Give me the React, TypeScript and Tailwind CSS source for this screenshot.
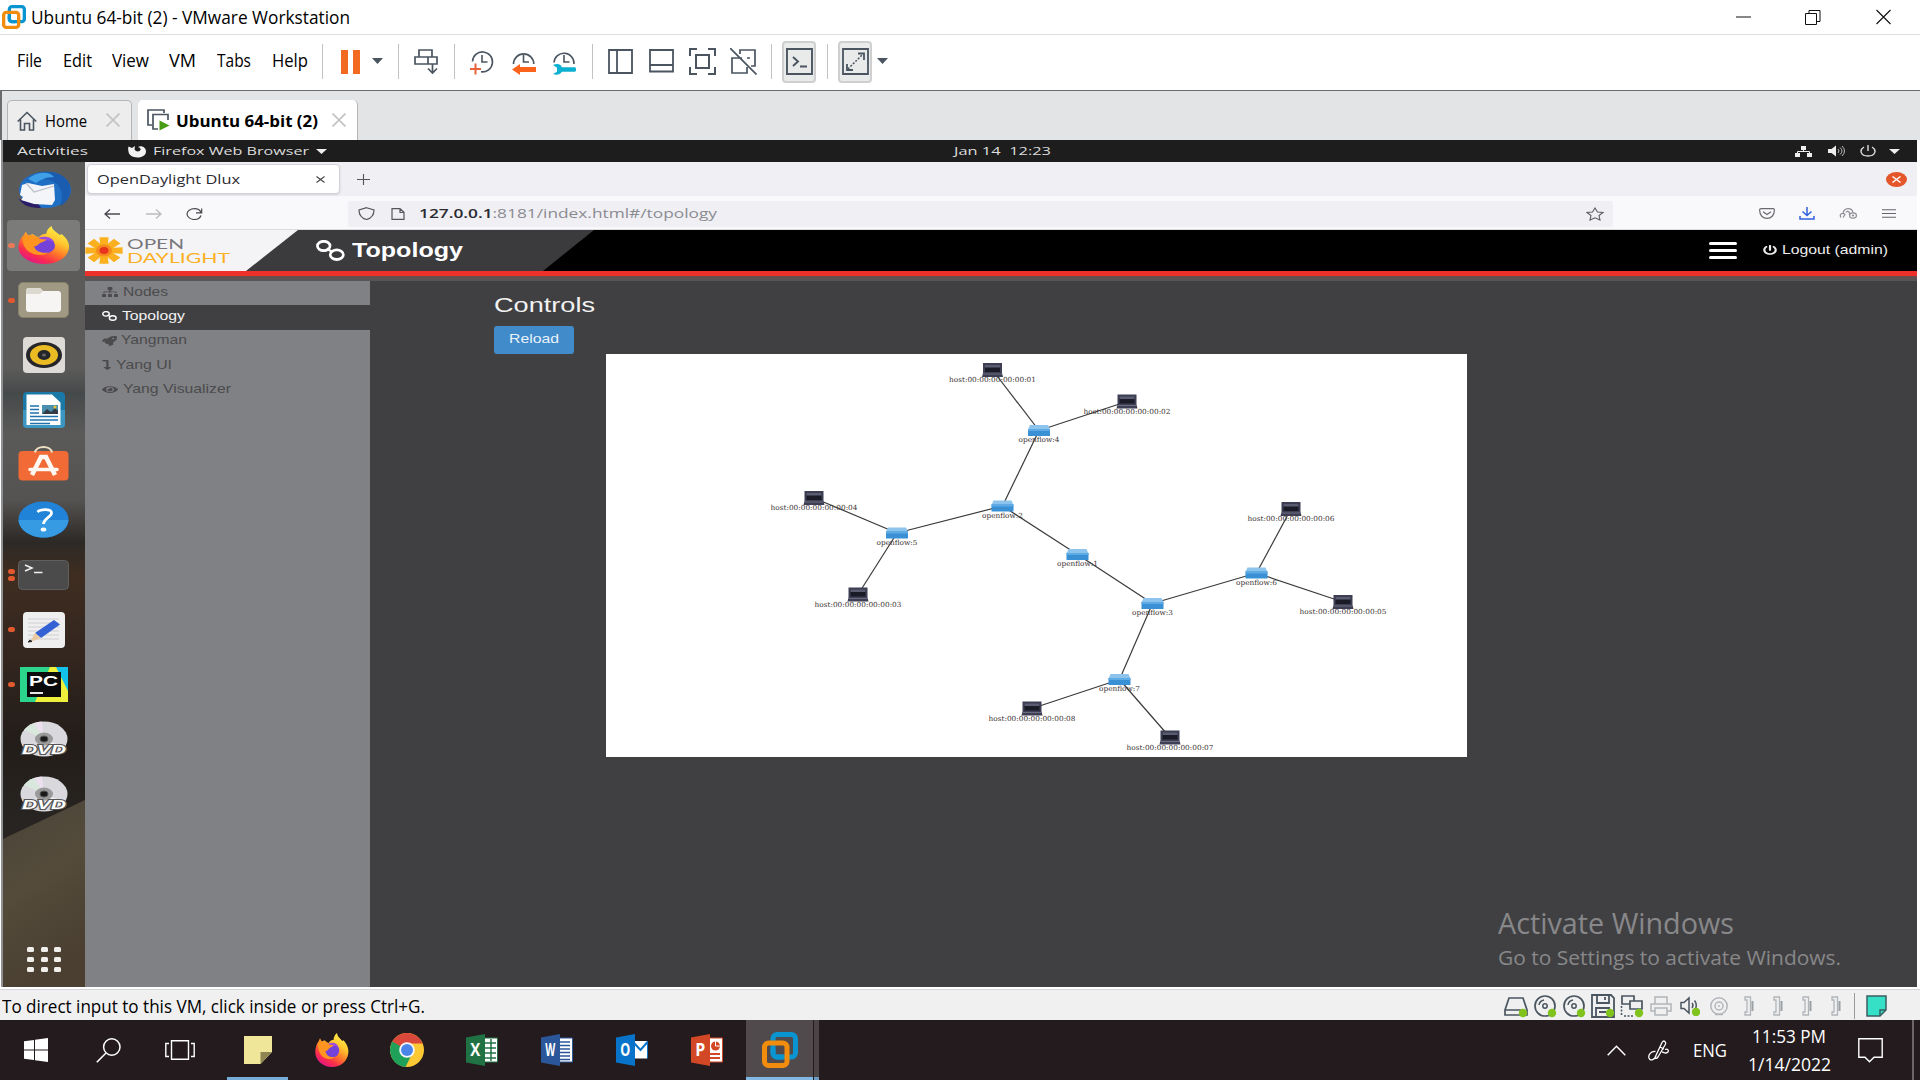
import React, { useLayoutEffect, useRef } from "react";
import { FaSitemap, FaRocket, FaEye, FaPowerOff, FaLevelDownAlt } from "react-icons/fa";

type FitProps = { className: string; children: React.ReactNode };

/* Stretches one line of text to the width of its box. */
function Fit({ className, children }: FitProps) {
  const outer = useRef<HTMLSpanElement>(null);
  const inner = useRef<HTMLSpanElement>(null);
  useLayoutEffect(() => {
    const o = outer.current;
    const i = inner.current;
    if (!o || !i) return;
    i.style.transform = "none";
    const ratio = o.getBoundingClientRect().width / i.getBoundingClientRect().width;
    i.style.transform = `scaleX(${ratio})`;
  });
  return (
    <span ref={outer} className={`block shrink-0 text-left whitespace-nowrap ${className}`}>
      <span ref={inner} className="inline-block origin-left">
        {children}
      </span>
    </span>
  );
}

type SvgProps = { box: string; className: string; children: React.ReactNode };
function Svg({ box, className, children }: SvgProps) {
  return (
    <svg viewBox={box} preserveAspectRatio="none" fill="none" className={`block shrink-0 ${className}`}>
      {children}
    </svg>
  );
}

const INK = "#4a5560";

function VmwareLogo({ className }: { className: string }) {
  return (
    <Svg box="0 0 36 36" className={className}>
      <rect x="11" y="2.5" width="22.5" height="22.5" rx="4" stroke="#0a94d0" strokeWidth="5" />
      <rect x="2.5" y="11" width="22.5" height="22.5" rx="4" stroke="#f28c0d" strokeWidth="5" />
      <path d="M11 16.5V21a4 4 0 0 0 4 4h5" stroke="#0a94d0" strokeWidth="5" />
    </Svg>
  );
}

function FirefoxLogo({ className, id }: { className: string; id: string }) {
  return (
    <Svg box="0 0 34 34" className={className}>
      <defs>
        <linearGradient id={id} x1="28" y1="3" x2="9" y2="33" gradientUnits="userSpaceOnUse">
          <stop offset="0" stopColor="#fff04a" />
          <stop offset="0.3" stopColor="#ffc52e" />
          <stop offset="0.55" stopColor="#ff7a28" />
          <stop offset="0.8" stopColor="#fb2d4c" />
          <stop offset="1" stopColor="#e31587" />
        </linearGradient>
      </defs>
      <path
        d="M3.500 8.500 5 5.200l1.700 3.200 3-1.200C10.500 8 12 9.500 13.500 10c1.500-2.500 3.500-3 5-3 .2-3 1.500-5.500 3.500-7 .3 3.600 2.800 5.300 5.300 8l1.200-.8c3.500 4.300 5.300 7.800 4.800 12.800C32.500 28 26 34 17 34S.3 27.300.3 19.200c0-4.200.9-7.700 3.200-10.700Z"
        fill={`url(#${id})`}
      />
      <circle cx="17" cy="17.500" r="7.200" fill="#7442d8" />
      <path d="M13.500 10.500c5-2 9 0 10.200 4.200-3-2.300-6-2-8-.2Z" fill="#9d4be0" />
      <path d="M3 9.500c4.500-1.800 8.500-1 11.500 2.200l4 .3c-.6 2-3.300 2.300-4.500 3.600-1.200 1.500-2 2.600-3.500 2.600 1 5 5 6.500 9.500 5.500-4 4-12 2.500-15-3.500C3.300 16.500 2.500 13 3 9.500Z" fill="#ff9420" />
    </Svg>
  );
}

function Clock({ children }: { children: React.ReactNode }) {
  return (
    <Svg box="0 0 24 26" className="h-[26px] w-[24px]">
      {children}
    </Svg>
  );
}

function Sep({ className }: { className: string }) {
  return <div className={`h-[35px] w-px shrink-0 bg-[#c2c2c2] ${className}`} />;
}

function TitleBar() {
  return (
    <div className="flex h-[34px] items-center bg-white">
      <VmwareLogo className="ml-[2px] h-6 w-6" />
      <Fit className="ml-[5px] w-[319px] pt-px text-[17.500px] text-black">Ubuntu 64-bit (2) - VMware Workstation</Fit>
      <Svg box="0 0 156 16" className="mr-[28px] ml-auto h-4 w-[156px]">
        <path d="M0 8h15" stroke="#111" />
        <path d="M69.500 4.500h11v11h-11zM73 4.500v-3h11v11h-3" stroke="#111" />
        <path d="m140.500 1 14 14m0-14-14 14" stroke="#111" strokeWidth="1.100" />
      </Svg>
    </div>
  );
}

function Caret() {
  return (
    <Svg box="0 0 11 6" className="h-[6px] w-[11px]">
      <path d="M0 0h11L5.500 6z" fill={INK} />
    </Svg>
  );
}

function Toolbar() {
  return (
    <div className="flex h-[54px] items-center border-t border-[#dedede] bg-white text-[17.500px] text-black">
      <div className="flex pb-[2px]">
        <Fit className="ml-[17px] w-[25px]">File</Fit>
        <Fit className="ml-[21px] w-[29px]">Edit</Fit>
        <Fit className="ml-[20px] w-[37px]">View</Fit>
        <Fit className="ml-[20px] w-[27px]">VM</Fit>
        <Fit className="ml-[21px] w-[34px]">Tabs</Fit>
        <Fit className="ml-[21px] w-[36px]">Help</Fit>
      </div>
      <Sep className="ml-[14px]" />
      <div className="ml-[18px] flex w-[19px] shrink-0 justify-between">
        <div className="h-[24px] w-[7px] bg-[#f26a22]" />
        <div className="h-[24px] w-[7px] bg-[#f26a22]" />
      </div>
      <div className="ml-[12px] pb-[2px]"><Caret /></div>
      <Sep className="ml-[15px]" />
      <Svg box="0 0 24 26" className="ml-[15px] h-[26px] w-[24px]">
        <path d="M5 1h13v7H5zM1 8h13v7H1zM14 8h9v7h-9zM18.500 15v9M14 19.500l4.500 4.500 4.500-4.500" stroke={INK} strokeWidth="1.700" />
      </Svg>
      <Sep className="ml-[16px]" />
      <div className="ml-[15px] shrink-0">
        <Clock>
          <path d="M2.500 12.500a10 10 0 1 1 8.500 10.300M12 6v7h5.500" stroke={INK} strokeWidth="1.600" />
          <path d="M5.500 14.500v11M0 20h11" stroke="#e8623a" strokeWidth="2" />
        </Clock>
      </div>
      <div className="ml-[18px] shrink-0">
        <Clock>
          <path d="M1.500 15a10 10 0 1 1 20.300 0M11.500 6v7H17" stroke={INK} strokeWidth="1.600" />
          <path d="M0 20.500 8 15v3h16v5H8v3z" fill="#f9631b" />
        </Clock>
      </div>
      <div className="ml-[16px] shrink-0">
        <Clock>
          <path d="M2 13.500a10 10 0 1 1 20 1.500M12 6v7h5.500" stroke={INK} strokeWidth="1.600" />
          <path d="M1 16c4-2 8-1 9 2.300h13c1.500 1 1.500 3.500 0 4.500H10C8 26 4 26.500 1 25l4-2.200v-4z" fill="#0cb0d0" />
        </Clock>
      </div>
      <Sep className="ml-[16px]" />
      <Svg box="0 0 25 25" className="ml-[15px] h-[25px] w-[25px]">
        <path d="M1 1h23v23H1zM9 1v23" stroke={INK} strokeWidth="1.800" />
      </Svg>
      <Svg box="0 0 25 25" className="ml-[16px] h-[25px] w-[25px]">
        <path d="M1 1h23v21.500H1zM1 16h23" stroke={INK} strokeWidth="1.800" />
      </Svg>
      <Svg box="0 0 27 27" className="ml-[15px] h-[27px] w-[27px]">
        <path d="M1 8V1h7M19 1h7v7M26 19v7h-7M8 26H1v-7M7 7h13v13H7z" stroke={INK} strokeWidth="2" />
      </Svg>
      <Svg box="0 0 27 27" className="ml-[14px] h-[27px] w-[27px]">
        <path d="M10 6V2h15v16h-4M12 10H2v15h15v-6M17 10h3M0 0l26.500 26.500" stroke={INK} strokeWidth="1.700" />
      </Svg>
      <Sep className="ml-[14px]" />
      <div className="ml-[10px] flex h-[42px] w-[34px] shrink-0 items-center justify-center rounded-[4px] border-2 border-[#cfcfcf] bg-[#e9eaea]">
        <Svg box="0 0 27 27" className="h-[27px] w-[27px]">
          <path d="M1 1h25v25H1zM7 9l5 4.500L7 18M14 18.500h7" stroke={INK} strokeWidth="1.900" />
        </Svg>
      </div>
      <Sep className="ml-[11px]" />
      <div className="ml-[10px] flex h-[42px] w-[34px] shrink-0 items-center justify-center rounded-[4px] border-2 border-[#cfcfcf] bg-[#e9eaea]">
        <Svg box="0 0 27 27" className="h-[27px] w-[27px]">
          <path d="M1 1h25v25H1zM16 5.500h6V12M5 16v6h6" stroke={INK} strokeWidth="1.800" />
          <path d="M6 21 21 6" stroke={INK} strokeWidth="1.500" strokeDasharray="2 1.500" />
        </Svg>
      </div>
      <div className="ml-[5px] pb-[2px]"><Caret /></div>
    </div>
  );
}

function TabClose({ className }: { className: string }) {
  return (
    <Svg box="0 0 14 14" className={`h-[14px] w-[14px] ${className}`}>
      <path d="m.5.500 13 13m0-13-13 13" stroke="#c3c3c3" strokeWidth="1.700" />
    </Svg>
  );
}

function VmTabs() {
  return (
    <div className="mt-[2px] flex h-[50px] items-end border-t-[1.500px] border-l-2 border-[#6b6b6b] bg-[#e3e4e5] text-[16.500px] text-black">
      <div className="ml-[5px] flex h-[40px] w-[125px] shrink-0 items-center rounded-t-[5px] border border-b-0 border-[#b5b5b5] bg-[#ededee]">
        <Svg box="0 0 20 20" className="ml-[9px] h-[20px] w-[20px]">
          <path d="M.7 10.500 10 1.500l9.300 9M3.500 8.500V19H7.500v-6.500h5V19h4V8.500" stroke={INK} strokeWidth="1.600" />
        </Svg>
        <Fit className="ml-[8px] w-[42px] pt-px">Home</Fit>
        <TabClose className="-mt-px ml-[19px]" />
      </div>
      <div className="ml-[6px] flex h-[40px] w-[220px] shrink-0 items-center rounded-t-[5px] border-r border-[#b5b5b5] bg-white">
        <Svg box="0 0 23 22" className="ml-[9px] h-[22px] w-[23px]">
          <path d="M5 16H1V1h16v3M11 20H6V5.500h15V11" stroke={INK} strokeWidth="1.700" />
          <path d="m12.500 11.500 10 5-10 5z" fill="#479c14" />
        </Svg>
        <Fit className="ml-[6px] w-[142px] pt-[2px] font-bold">Ubuntu 64-bit (2)</Fit>
        <TabClose className="-mt-px ml-[14px]" />
      </div>
    </div>
  );
}

function GnomeBar() {
  return (
    <div className="flex h-[22px] items-center bg-[#1d1d1d] text-[11px] font-medium text-[#dedede]">
      <Fit className="ml-[14px] w-[71px]">Activities</Fit>
      <Svg box="0 0 18 13" className="ml-[40px] h-[13px] w-[18px]">
        <path d="M.5 1.500 4 3 7 1 6.500 4.500C8 7 11.500 7 12.500 5 13 3.500 12 2.500 10 2c3.500-2 8 .5 8 4.500 0 3.500-3.500 6-8.500 6S.5 9.500.5 6.500C0 4.500 0 3 .5 1.500Z" fill="#f2f2f2" />
      </Svg>
      <Fit className="ml-[7px] w-[156px]">Firefox Web Browser</Fit>
      <Svg box="0 0 11 5" className="ml-[7px] h-[5px] w-[11px]"><path d="M0 0h11L5.500 5z" fill="#eee" /></Svg>
      <Fit className="ml-[627px] w-[97px] whitespace-pre">{"Jan 14  12:23"}</Fit>
      <Svg box="0 0 17 11" className="ml-[744px] h-[11px] w-[17px]">
        <path d="M6 0h5v4H6zM0 7h5v4H0zM12 7h5v4h-5z" fill="#eee" />
        <path d="M8.500 3v2.500M2.500 8V5.500h12V8" stroke="#eee" />
      </Svg>
      <Svg box="0 0 17 12" className="ml-[16px] h-[12px] w-[17px]">
        <path d="M0 4h3.500L8 .5v11L3.500 8H0z" fill="#eee" />
        <path d="M10 4q2 2 0 4M12 2.500q4 3.500 0 7M14 1q5 5 0 10" stroke="#bbb" />
      </Svg>
      <Svg box="0 0 16 12" className="ml-[15px] h-[12px] w-[16px]">
        <path d="M4 2C-1 5 .5 11 8 11s9-6 4-9M8 0v6" stroke="#ddd" strokeWidth="1.400" />
      </Svg>
      <Svg box="0 0 11 5" className="ml-[13px] h-[5px] w-[11px]"><path d="M0 0h11L5.500 5z" fill="#eee" /></Svg>
    </div>
  );
}

function Dvd() {
  return (
    <Svg box="0 0 48 36" className="h-[36px] w-[48px]">
      <ellipse cx="24" cy="18" rx="23.500" ry="17.500" fill="#d9d8dc" />
      <path d="M24 18 4 9Q8 4 14 2z" fill="#d8e8dc" />
      <path d="M24 18 14 2Q18 .5 22 .5z" fill="#ece0ee" />
      <path d="M24 18 44 26Q40 32 34 34z" fill="#efefef" />
      <ellipse cx="24" cy="18" rx="9" ry="6.500" fill="#9a9a9a" />
      <ellipse cx="24" cy="18" rx="4" ry="3" fill="#1c1a19" stroke="#555" />
      <text x="2" y="32.500" textLength="44" lengthAdjust="spacingAndGlyphs" fontFamily="Liberation Sans" fontStyle="italic" fontWeight="700" fontSize="12" fill="#fff" stroke="#555" strokeWidth="1.800" paintOrder="stroke">DVD</text>
    </Svg>
  );
}

const dock: { name: string; dots: number; active?: boolean; icon: React.ReactNode }[] = [
  {
    name: "thunderbird", dots: 0,
    icon: (
      <Svg box="0 0 56 38" className="h-[38px] w-[56px]">
        <ellipse cx="29" cy="19" rx="26" ry="18" fill="#1f6fc4" />
        <path d="M10 10C18-2 42-3 52 10c5 9 2 20-8 25 4-8 2-20-6-24-8-4-20-4-28-1Z" fill="#1a5db0" />
        <path d="M12 8C20 0 34 0 38 6c-8 0-14 3-18 6z" fill="#3fa0e8" />
        <path d="M3 28c4 7 12 9 22 9l-4-6z" fill="#2a1c66" />
        <path d="m6 14 6-2 14 3 12-2 1 16-3 5-18-1-13-4 2-3-3-2z" fill="#f4f5f8" />
        <path d="m10 12 8 9 20-6" stroke="#b9bec8" strokeWidth="1.200" />
      </Svg>
    ),
  },
  { name: "firefox", dots: 1, active: true, icon: <FirefoxLogo id="ff-dock" className="h-[38px] w-[52px]" /> },
  {
    name: "files", dots: 1,
    icon: (
      <div className="flex h-[36px] w-[51px] items-center justify-center rounded-[5px] border border-[#87816c] bg-[#a09a84]">
        <Svg box="0 0 37 24" className="h-[24px] w-[37px]">
          <path d="M1 3Q1 0 4 0h11l3 3h15q3 0 3 3v15q0 3-3 3H4q-3 0-3-3z" fill="#f6f5f3" />
          <path d="M1 3Q1 0 4 0h11l3 3-3 3H1z" fill="#dcd9d0" />
        </Svg>
      </div>
    ),
  },
  {
    name: "rhythmbox", dots: 0,
    icon: (
      <div className="flex h-[36px] w-[42px] items-center justify-center rounded-[4px] bg-[#dedad5]">
        <Svg box="0 0 36 26" className="h-[26px] w-[36px]">
          <ellipse cx="18" cy="13" rx="18" ry="13" fill="#26262a" />
          <ellipse cx="18" cy="13" rx="14" ry="10" fill="#eabb22" />
          <ellipse cx="18" cy="13" rx="6.500" ry="5" fill="#26262a" />
          <ellipse cx="18" cy="13" rx="2" ry="1.500" fill="#666" />
        </Svg>
      </div>
    ),
  },
  {
    name: "writer", dots: 0,
    icon: (
      <Svg box="0 0 42 36" className="h-[36px] w-[42px]">
        <rect width="42" height="36" rx="4" fill="#1b79a8" />
        <path d="M0 18h42v14q0 4-4 4H4q-4 0-4-4z" fill="#3b96c2" />
        <path d="M3.500 2.500H29l8.500 8V33h-34z" fill="#fff" />
        <path d="M7 14h9M7 17.500h9M7 21h9M7 24.500h28M7 28h28M7 31.500h20" stroke="#1f73ad" strokeWidth="1.500" />
        <path d="M19 13h16v9H19z" fill="#4b8fae" />
        <path d="m19 22 5-5 4 3 4-4 3 3v3z" fill="#333c44" />
        <circle cx="32" cy="15" r="1.500" fill="#f0c530" />
      </Svg>
    ),
  },
  {
    name: "software", dots: 0,
    icon: (
      <Svg box="0 0 51 36" className="-mt-[3px] h-[36px] w-[51px]">
        <rect x=".5" y="6" width="50" height="29.500" rx="4" fill="#f26a35" />
        <path d="M17 7.500C18 0 33 0 34 7.500" stroke="#eee0c4" strokeWidth="2" />
        <path d="M14 30 23 12h5l9 18" stroke="#fff8f2" strokeWidth="4.500" />
        <path d="M12 24.500h27" stroke="#fff8f2" strokeWidth="3.500" strokeLinecap="round" />
      </Svg>
    ),
  },
  {
    name: "help", dots: 0,
    icon: (
      <Svg box="0 0 51 37" className="h-[37px] w-[51px]">
        <ellipse cx="25.500" cy="18.500" rx="25" ry="18" fill="#2183d8" />
        <path d="M.5 19h50c-1 10-12 17.500-25 17.500S1.500 29 .5 19Z" fill="#379be3" />
        <path d="M19.500 11c3-3 14-3.500 14 1 0 4-7.500 5-8 11" stroke="#fff" strokeWidth="2.800" />
        <ellipse cx="25.500" cy="28.500" rx="2.800" ry="2" fill="#fff" />
      </Svg>
    ),
  },
  {
    name: "terminal", dots: 2,
    icon: (
      <Svg box="0 0 51 30" className="h-[30px] w-[51px]">
        <rect x=".5" y=".5" width="50" height="29" rx="4" fill="#4b4b4b" stroke="#5f5f5f" />
        <path d="m7 5 7 3-7 3M16 12.500h8.500" stroke="#f1f1f1" strokeWidth="1.500" />
      </Svg>
    ),
  },
  {
    name: "editor", dots: 1,
    icon: (
      <Svg box="0 0 42 36" className="h-[36px] w-[42px]">
        <rect width="42" height="36" rx="4" fill="#efeff0" />
        <path d="M5 7h31M5 11h31M5 15h31M5 19h31M5 23h31M5 27h31" stroke="#cfcfd2" />
        <path d="m12 21 19-13 6 4.500L18 26z" fill="#3461d4" />
        <path d="m12 21 6 5-11 4z" fill="#e9c9a0" />
        <path d="m5 30 2-2 2 1.500z" fill="#222" stroke="#222" />
      </Svg>
    ),
  },
  {
    name: "pycharm", dots: 1,
    icon: (
      <Svg box="0 0 48 35" className="h-[35px] w-[48px]">
        <path d="M0 0h48v35H0z" fill="#2bd68c" />
        <path d="M34 0h14v26z" fill="#12c2ea" />
        <path d="M15 35 30 0h6l12 24v11z" fill="#eef03c" />
        <path d="M7 5h34v25H7z" fill="#0b0b0b" />
        <text x="9" y="19" textLength="29" lengthAdjust="spacingAndGlyphs" fontFamily="Liberation Sans" fontWeight="700" fontSize="15" fill="#fff">PC</text>
        <path d="M10 26h13" stroke="#fff" strokeWidth="1.800" />
      </Svg>
    ),
  },
  { name: "dvd-1", dots: 0, icon: <Dvd /> },
  { name: "dvd-2", dots: 0, icon: <Dvd /> },
];

function Dock() {
  return (
    <div className="relative flex w-[82px] shrink-0 flex-col overflow-hidden bg-[#33261f]">
      <svg viewBox="0 0 82 825" preserveAspectRatio="none" className="absolute inset-0 h-full w-full">
        <defs>
          <linearGradient id="wall" x1="0" y1="0" x2="0" y2="1">
            <stop offset="0" stopColor="#5a5a58" />
            <stop offset="0.25" stopColor="#5c5b5a" />
            <stop offset="0.28" stopColor="#46494a" />
            <stop offset="0.33" stopColor="#5a5a59" />
            <stop offset="0.41" stopColor="#555351" />
            <stop offset="0.46" stopColor="#2c2926" />
            <stop offset="0.5" stopColor="#3f2d21" />
            <stop offset="0.6" stopColor="#33261f" />
            <stop offset="0.7" stopColor="#231d19" />
            <stop offset="0.8" stopColor="#272421" />
            <stop offset="1" stopColor="#272421" />
          </linearGradient>
          <linearGradient id="ground" x1="0" y1="0" x2="0.300" y2="1">
            <stop offset="0" stopColor="#4a4338" />
            <stop offset="0.5" stopColor="#544b3b" />
            <stop offset="1" stopColor="#4a3f31" />
          </linearGradient>
        </defs>
        <path d="M0 0h82v825H0z" fill="url(#wall)" />
        <path d="M0 677 82 638v187H0z" fill="url(#ground)" />
      </svg>
      <div className="relative flex flex-1 flex-col pt-px">
        {dock.map((d) => (
          <div key={d.name} className="flex h-[54.900px] shrink-0 items-center">
            <div className="flex w-[12px] shrink-0 flex-col items-end gap-[2px]">
              {Array.from({ length: d.dots }, (_, n) => (
                <div key={n} className="h-[5px] w-[7px] rounded-full bg-[#e0592f]" />
              ))}
            </div>
            <div
              className={
                d.active
                  ? "-ml-[8px] flex h-[51px] w-[73px] items-center justify-center rounded-[4px] bg-white/20"
                  : "-ml-[8px] flex h-[51px] w-[73px] items-center justify-center"
              }
            >
              {d.icon}
            </div>
          </div>
        ))}
        <div className="mt-auto mb-[15px] ml-[24px] grid w-[34px] grid-cols-3 gap-x-[7px] gap-y-[5px]">
          {Array.from({ length: 9 }, (_, n) => (
            <div key={n} className="h-[5px] w-[7px] rounded-[1.500px] bg-[#f1efec]" />
          ))}
        </div>
      </div>
    </div>
  );
}

function BrowserChrome() {
  return (
    <>
      <div className="flex h-[34px] shrink-0 items-center bg-[#f0eff3] text-[12px] text-[#2a2930]">
        <div className="ml-[2px] flex h-[30px] w-[253px] shrink-0 items-center rounded-[4px] border border-[#d3d2d8] bg-white pt-px shadow-sm">
          <Fit className="ml-[9px] w-[143px] pt-px font-medium">OpenDaylight Dlux</Fit>
          <Svg box="0 0 9 7" className="ml-[76px] h-[7px] w-[9px]">
            <path d="m.5.500 8 6m0-6-8 6" stroke="#444" strokeWidth="1.100" />
          </Svg>
        </div>
        <Svg box="0 0 13 11" className="mt-px ml-[17px] h-[11px] w-[13px]">
          <path d="M6.500 0v11M0 5.500h13" stroke="#555" strokeWidth="1.100" />
        </Svg>
        <div className="mr-[10px] ml-auto flex h-[15px] w-[21px] items-center justify-center rounded-[50%] bg-[#e4552a]">
          <Svg box="0 0 9 7" className="h-[7px] w-[9px]">
            <path d="m.5.500 8 6m0-6-8 6" stroke="#fff" strokeWidth="1.400" />
          </Svg>
        </div>
      </div>
      <div className="flex h-[34px] shrink-0 items-center border-b border-[#dcdce0] bg-[#f9f9fb] pt-[2px] text-[12px]">
        <Svg box="0 0 16 10" className="ml-[19px] h-[10px] w-[16px]">
          <path d="M16 5H1M6 .5 1 5l5 4.500" stroke="#4a4a50" strokeWidth="1.300" />
        </Svg>
        <Svg box="0 0 16 10" className="ml-[26px] h-[10px] w-[16px]">
          <path d="M0 5h15M10 .5 15 5l-5 4.500" stroke="#bcbcc0" strokeWidth="1.300" />
        </Svg>
        <Svg box="0 0 17 12" className="ml-[24px] h-[12px] w-[17px]">
          <path d="M15 7.500C14 10 11.500 11.500 8.500 11.500 4.500 11.500 1 9 1 6S4.500.7 8.500.7C11.500.7 14 2.200 15 4.500M15.700.5v4.300H10" stroke="#4a4a50" strokeWidth="1.200" />
        </Svg>
        <div className="ml-[145px] flex h-[26px] w-[1265px] shrink-0 items-center rounded-[3px] bg-[#f0f0f4]">
          <Svg box="0 0 17 13" className="ml-[10px] h-[13px] w-[17px]">
            <path d="M8.500.7 16 3c0 5-2 8-7.500 9.500C3 11 1 8 1 3Z" stroke="#55555b" strokeWidth="1.200" />
          </Svg>
          <Svg box="0 0 14 12" className="ml-[16px] h-[12px] w-[14px]">
            <path d="M1 .7h8l4 3.500v7.100H1zM9 .7v3.800h4" stroke="#55555b" strokeWidth="1.200" />
          </Svg>
          <Fit className="ml-[14px] w-[298px] text-[#8a8a91]">
            <span className="font-semibold text-[#2a2930]">127.0.0.1</span>:8181/index.html#/topology
          </Fit>
          <Svg box="0 0 18 14" className="mr-[9px] ml-auto h-[14px] w-[18px]">
            <path d="m9 1 2.500 4 5.500.5-4 3 1 4.500-5-2.200L4 13l1-4.500-4-3L6.500 5z" stroke="#5c5c62" strokeWidth="1.100" />
          </Svg>
        </div>
        <Svg box="0 0 16 11" className="ml-[146px] h-[11px] w-[16px]">
          <path d="M2 .6h12q1.400 0 1.400 1.500C15.400 7.500 12 10.300 8 10.300S.6 7.500.6 2.100Q.6.6 2 .6ZM4 3.700l4 2.800 4-2.800" stroke="#6a6a70" strokeWidth="1.200" />
        </Svg>
        <Svg box="0 0 16 13" className="ml-[24px] h-[13px] w-[16px]">
          <path d="M8 0v8M3.500 4.500 8 8.500l4.500-4M1 9v3h14V9" stroke="#2f62dc" strokeWidth="1.500" />
        </Svg>
        <Svg box="0 0 18 11" className="ml-[24px] h-[11px] w-[18px]">
          <path d="M2 9.500C-.5 6 4 4 6 6.500L4 9.500M4 5.500C5-1 13-.5 14 4.500" stroke="#8d8d92" strokeWidth="1.200" />
          <path d="M7 4.500C9 2 11 4 10.500 7" stroke="#8d8d92" strokeWidth="1.200" />
          <ellipse cx="14" cy="7.500" rx="3.400" ry="2.700" stroke="#8d8d92" strokeWidth="1.200" />
          <ellipse cx="14" cy="7.500" rx="1.200" ry="1" fill="#8d8d92" />
        </Svg>
        <Svg box="0 0 14 9" className="ml-[25px] h-[9px] w-[14px]">
          <path d="M0 .7h14M0 4.500h14M0 8.300h14" stroke="#66666b" strokeWidth="1.100" />
        </Svg>
      </div>
    </>
  );
}

function ChainIcon({ className }: { className: string }) {
  return (
    <Svg box="0 0 30 21" className={className}>
      <ellipse cx="8" cy="6" rx="6.500" ry="4.700" stroke="#fff" strokeWidth="2.800" />
      <ellipse cx="21.500" cy="14.700" rx="6.800" ry="4.800" stroke="#fff" strokeWidth="2.800" />
      <path d="m11 8.500 6 3.500" stroke="#fff" strokeWidth="2.500" />
    </Svg>
  );
}

function DluxHeader() {
  return (
    <>
      <div className="flex h-[41px] shrink-0 bg-black font-['Liberation_Sans',sans-serif]">
        <div className="flex w-[509px] shrink-0 bg-[#3b3b3d] [clip-path:polygon(0_0,100%_0,458px_100%,0_100%)]">
          <div className="flex w-[213px] shrink-0 items-center bg-[#f4f4f6] [clip-path:polygon(0_0,100%_0,161px_100%,0_100%)]">
            <Svg box="-19 -13.500 38 27" className="h-[27px] w-[38px]">
              {[0, 45, 90, 135].map((a) => (
                <path key={a} transform={`scale(1.400 1) rotate(${a})`} d="M-3.300-13.300h6.600l-1 13.300 1 13.300h-6.600l1-13.300z" fill="#fbb01f" />
              ))}
              <ellipse rx="8" ry="6" fill="#f58a1f" />
              <ellipse rx="4.500" ry="3.500" fill="#e8341c" />
            </Svg>
            <div className="ml-[4px] flex flex-col leading-[14px]">
              <Fit className="w-[57px] font-[Lato] text-[14px] font-normal text-[#77777a]">OPEN</Fit>
              <Fit className="w-[103px] font-[Lato] text-[14px] font-normal text-[#fbb01f]">DAYLIGHT</Fit>
            </div>
          </div>
          <div className="ml-[18px] flex items-center">
            <ChainIcon className="h-[21px] w-[29px]" />
            <Fit className="ml-[7px] w-[111px] pb-px text-[20px] font-bold text-white">Topology</Fit>
          </div>
        </div>
        <div className="mr-[29px] ml-auto flex items-center pb-px text-[13px] text-[#eee]">
          <div className="flex h-[17px] w-[28px] flex-col justify-between">
            <div className="h-[3px] rounded-sm bg-white" />
            <div className="h-[3px] rounded-sm bg-white" />
            <div className="h-[3px] rounded-sm bg-white" />
          </div>
          <FaPowerOff preserveAspectRatio="none" className="ml-[26px] h-[10px] w-[14px]" />
          <Fit className="ml-[5px] w-[106px]">Logout (admin)</Fit>
        </div>
      </div>
      <div className="h-[5px] shrink-0 bg-[#ee302a]" />
      <div className="h-[5px] shrink-0 bg-linear-to-b from-[#6b4d4c] to-[#545658]" />
    </>
  );
}

type Pt = [number, number];
const switches: Record<string, Pt> = {
  "1": [1077.5, 554.5], "2": [1002.5, 506], "3": [1152.5, 603.5], "4": [1039, 430.5],
  "5": [897, 533], "6": [1256.5, 573], "7": [1119.5, 679.5],
};
const hosts: Record<string, Pt> = {
  "01": [992.5, 370], "02": [1127, 401.5], "03": [858, 594.5], "04": [814, 498],
  "05": [1343, 602], "06": [1291, 509], "07": [1170, 737.5], "08": [1032, 708.5],
};
const links: [Pt, Pt][] = [
  [switches["1"], switches["2"]], [switches["1"], switches["3"]],
  [switches["2"], switches["4"]], [switches["2"], switches["5"]],
  [switches["3"], switches["6"]], [switches["3"], switches["7"]],
  [switches["4"], hosts["01"]], [switches["4"], hosts["02"]],
  [switches["5"], hosts["03"]], [switches["5"], hosts["04"]],
  [switches["6"], hosts["05"]], [switches["6"], hosts["06"]],
  [switches["7"], hosts["07"]], [switches["7"], hosts["08"]],
];

function TopologyGraph() {
  return (
    <svg viewBox="606 354 861 403" className="block h-[403px] w-[861px] bg-white">
      {links.map(([a, b], i) => (
        <line key={i} x1={a[0]} y1={a[1]} x2={b[0]} y2={b[1]} stroke="#3a3a3a" strokeWidth="1.200" />
      ))}
      {Object.entries(switches).map(([id, [x, y]]) => (
        <g key={id} transform={`translate(${x} ${y})`}>
          <path d="M-9-5.500H9l2 4.500h-22z" fill="#8cc4ee" />
          <path d="M-11-1.500h22v7h-22z" fill="#3a90d4" />
          <path d="M-11-1.500h22v2h-22z" fill="#5cabe4" />
          <text y="11.500" x="-20.500" textLength="41" lengthAdjust="spacingAndGlyphs" fontFamily="DejaVu Serif" fontSize="7" fill="#3c3434">{`openflow:${id}`}</text>
        </g>
      ))}
      {Object.entries(hosts).map(([id, [x, y]]) => (
        <g key={id} transform={`translate(${x} ${y})`}>
          <path d="M-9.500-7h19V3l1 4h-21l1-4z" fill="#3e3e54" />
          <path d="M-7.500-5.200h15V2h-15z" fill="#1b1b28" />
          <path d="M-7.500-5.200h15v2.700h-15z" fill="#5a5c72" />
          <path d="M-9.500 4h19" stroke="#77788c" strokeWidth=".8" />
          <text y="12" x="-43.500" textLength="87" lengthAdjust="spacingAndGlyphs" fontFamily="DejaVu Serif" fontSize="7" fill="#3c3434">{`host:00:00:00:00:00:${id}`}</text>
        </g>
      ))}
    </svg>
  );
}

function DluxBody() {
  return (
    <div className="flex flex-1 bg-[#404042] font-['Liberation_Sans',sans-serif]">
      <nav className="flex w-[285px] shrink-0 flex-col bg-[#808184] text-[13.500px] text-[#4b4b4d]">
        <div className="flex h-[24px] items-center pb-[2px] pl-[17px]">
          <FaSitemap preserveAspectRatio="none" className="h-[10px] w-[16px]" />
          <Fit className="ml-[5px] w-[45px]">Nodes</Fit>
        </div>
        <div className="flex h-[25px] items-center bg-[#404042] pb-[3px] pl-[17px] text-[#f2f2f2]">
          <ChainIcon className="h-[10px] w-[15px]" />
          <Fit className="ml-[5px] w-[63px]">Topology</Fit>
        </div>
        <div className="flex h-[24px] items-center pb-[3px] pl-[17px]">
          <FaRocket preserveAspectRatio="none" className="h-[10px] w-[15px]" />
          <Fit className="ml-[4px] w-[66px]">Yangman</Fit>
        </div>
        <div className="flex h-[24px] items-center pb-[2px] pl-[17px]">
          <FaLevelDownAlt preserveAspectRatio="none" className="h-[10px] w-[9px]" />
          <Fit className="ml-[5px] w-[56px]">Yang UI</Fit>
        </div>
        <div className="flex h-[24px] items-center pb-[2px] pl-[17px]">
          <FaEye preserveAspectRatio="none" className="h-[9px] w-[16px]" />
          <Fit className="ml-[5px] w-[108px]">Yang Visualizer</Fit>
        </div>
      </nav>
      <main className="flex flex-1 flex-col pl-[124px]">
        <Fit className="mt-[11px] w-[101px] text-[20px] leading-[26px] text-[#f2f2f2]">Controls</Fit>
        <button className="mt-[8px] flex h-[28px] w-[80px] justify-center rounded-[3px] bg-[#428bca] pt-[3px] text-[13px] text-[#e9f2f9]">
          <Fit className="w-[50px]">Reload</Fit>
        </button>
        <div className="ml-[112px]">
          <TopologyGraph />
        </div>
        <div className="mt-auto mb-[15px] ml-[1004px] flex flex-col font-['Open_Sans','Noto_Sans',sans-serif] text-[#88888a]">
          <Fit className="w-[236px] text-[29px] leading-[38px]">Activate Windows</Fit>
          <Fit className="w-[343px] text-[20.500px] leading-[30px]">Go to Settings to activate Windows.</Fit>
        </div>
      </main>
    </div>
  );
}

function Dot({ x, y }: { x: number; y: number }) {
  return <circle cx={x} cy={y} r="4.200" fill="#7fc31c" />;
}

function StatusBar() {
  return (
    <div className="flex h-[31px] items-center border-t border-[#d5d6db] bg-[#f0f0f0] pt-[2px] text-[17.500px] text-black">
      <Fit className="ml-[2px] w-[423px]">To direct input to this VM, click inside or press Ctrl+G.</Fit>
      <Svg box="0 0 24 24" className="ml-[1079px] h-6 w-6">
        <path d="M5 4h14l4 12v5H1v-5zM1 16h16" stroke={INK} strokeWidth="1.700" /><Dot x={19} y={19} />
      </Svg>
      {[0, 1].map((n) => (
        <Svg key={n} box="0 0 24 24" className="ml-[5px] h-6 w-6">
          <circle cx="12" cy="12" r="10" stroke={INK} strokeWidth="1.700" />
          <circle cx="12" cy="12" r="2.200" stroke={INK} strokeWidth="1.500" />
          <path d="M6 11a6 6 0 0 1 5-5" stroke={INK} strokeWidth="1.500" /><Dot x={19} y={19} />
        </Svg>
      ))}
      <Svg box="0 0 24 24" className="ml-[5px] h-6 w-6">
        <path d="M1 1h19l3 3v19H1zM6 1v8h12V1M14 3v3M5 23v-9h14M8 18h7" stroke={INK} strokeWidth="1.800" /><Dot x={19} y={19} />
      </Svg>
      <Svg box="0 0 24 24" className="ml-[5px] h-6 w-6">
        <path d="M2 2h12v8H2z" stroke={INK} strokeWidth="1.700" />
        <path d="M10 7h12v8H10z" fill="#f0f0f0" stroke={INK} strokeWidth="1.700" />
        <path d="M1.500 12v10M4 22h10" stroke={INK} strokeDasharray="2 1.500" strokeWidth="1.500" /><Dot x={19} y={19} />
      </Svg>
      <Svg box="0 0 22 20" className="ml-[6px] h-[20px] w-[22px]">
        <path d="M5 8V1h12v7M5 15H1V8h20v7h-4M5 12h12v7H5z" stroke="#b1b5b9" strokeWidth="1.500" />
      </Svg>
      <Svg box="0 0 20 20" className="ml-[8px] h-[20px] w-[20px]">
        <path d="M1 6.500h3l5-4.500v15l-5-4.500H1zM12 7q2 2 0 5M14.500 4.500q3 4 1 8" stroke={INK} strokeWidth="1.500" /><Dot x={16} y={16} />
      </Svg>
      <Svg box="0 0 20 20" className="ml-[9px] h-[20px] w-[20px]">
        <circle cx="10" cy="10" r="8.200" stroke="#b1b5b9" strokeWidth="1.500" />
        <circle cx="10" cy="10" r="4" stroke="#b1b5b9" strokeWidth="1.500" />
        <path d="M6 18.500h8M9 10h2" stroke="#b1b5b9" strokeWidth="1.500" />
      </Svg>
      <div className="ml-[15px] flex gap-[19px]">
        {[0, 1, 2, 3].map((n) => (
          <Svg key={n} box="0 0 10 20" className="h-[20px] w-[10px]">
            <path d="M1 1h5.500v18H1v-3h2V4H1z" stroke="#b1b5b9" strokeWidth="1.300" />
            <path d="M8.500 5v10" stroke="#9ba0a5" strokeWidth="2" />
          </Svg>
        ))}
      </div>
      <div className="ml-[13px] h-[26px] w-px bg-[#9a9a9a]" />
      <Svg box="0 0 21 22" className="ml-[11px] h-[22px] w-[21px]">
        <path d="M1 1h19v14l-6 6H1z" fill="#35e0c6" stroke="#3b5c60" strokeWidth="1.500" />
        <path d="M14 21v-6h6" stroke="#3b5c60" strokeWidth="1.500" />
      </Svg>
    </div>
  );
}

type OfficeProps = { color: string; letter: string; className: string; children: React.ReactNode };
function OfficeIcon({ color, letter, className, children }: OfficeProps) {
  return (
    <Svg box="0 0 32 32" className={`h-8 w-8 ${className}`}>
      <path d="M18 4h13.500v24H18z" fill="#fff" stroke={color} />
      {children}
      <path d="M0 3.500 19 0v32L0 28.500z" fill={color} />
      <text x="9.300" y="22.200" textAnchor="middle" fontFamily="Open Sans" fontWeight="700" fontSize="17" fill="#fff" textLength="10" lengthAdjust="spacingAndGlyphs">{letter}</text>
    </Svg>
  );
}

function Taskbar() {
  return (
    <div className="flex h-[60px] items-center bg-[#231b1d] text-white">
      <Svg box="0 0 24 24" className="ml-[24px] h-6 w-6">
        <path d="M0 3.300 10 2v9.500H0zM11 1.800 24 0v11.500H11zM0 12.500h10V22L0 20.700zM11 12.500h13V24l-13-1.800z" fill="#fff" />
      </Svg>
      <Svg box="0 0 25 25" className="ml-[48px] h-[25px] w-[25px]">
        <circle cx="15.800" cy="9" r="8.200" stroke="#fff" strokeWidth="1.500" />
        <path d="M10 15 .8 24.300" stroke="#fff" strokeWidth="1.600" />
      </Svg>
      <Svg box="0 0 30 20" className="ml-[44px] h-[20px] w-[30px]">
        <path d="M6.500.8h17v18.500h-17zM4 3.500H.8v13H4M26 3.500h3.200v13H26" stroke="#fff" strokeWidth="1.400" />
      </Svg>
      <div className="ml-[32px] flex h-full w-[61px] shrink-0 flex-col items-center justify-end">
        <Svg box="0 0 28 28" className="mb-[13px] h-[28px] w-[28px]">
          <path d="M0 0h28v16L16.500 28H0z" fill="#efe69a" />
          <path d="M16.500 28V16H28z" fill="#8e8552" />
        </Svg>
        <div className="h-[3px] w-full shrink-0 bg-[#76acd8]" />
      </div>
      <FirefoxLogo id="ff-task" className="-mt-[1px] ml-[27px] h-[34px] w-[34px]" />
      <Svg box="0 0 34 34" className="ml-[41px] h-[34px] w-[34px]">
        <circle cx="17" cy="17" r="17" fill="#fcc934" />
        <path d="M17 17 1.500 10A17 17 0 0 1 32.500 10L33 10.500H17z" fill="#d9483b" />
        <path d="M17 17 2.300 8.500A17 17 0 0 0 15.500 34L21.500 22z" fill="#1fa15a" />
        <circle cx="17" cy="17" r="7.800" fill="#f4f6f8" />
        <circle cx="17" cy="17" r="6" fill="#4a86ea" />
      </Svg>
      <OfficeIcon color="#207245" letter="X" className="ml-[42px]">
        <path d="M19 9h11M19 14h11M19 19h11M19 24h11M25 5v22" stroke="#207245" strokeWidth="1.500" />
      </OfficeIcon>
      <OfficeIcon color="#2b579a" letter="W" className="ml-[43px]">
        <path d="M19 8h10M19 11.500h10M19 15h10M19 18.500h10M19 22h10M19 25.500h10" stroke="#2b579a" strokeWidth="1.500" />
      </OfficeIcon>
      <OfficeIcon color="#0873c8" letter="O" className="ml-[43px]">
        <path d="m18 9 6.500 7 7-8" stroke="#0873c8" strokeWidth="2" />
        <path d="M17 3h15v4H17zM17 24.500h15V29H17z" fill="#231b1d" />
      </OfficeIcon>
      <OfficeIcon color="#d24726" letter="P" className="ml-[43px]">
        <circle cx="24.500" cy="12" r="4.500" fill="#d24726" />
        <path d="M24.500 12V7M24.500 12h5" stroke="#fff" />
        <path d="M19 20h10M19 24h10" stroke="#d24726" strokeWidth="1.800" />
      </OfficeIcon>
      <div className="ml-[23px] flex h-full w-[67px] shrink-0 flex-col items-center justify-end bg-[#504a4c]">
        <VmwareLogo className="mb-[9px] h-[36px] w-[36px]" />
        <div className="h-[3px] w-full shrink-0 bg-[#82b8e4]" />
      </div>
      <div className="ml-px flex h-full w-[5px] shrink-0 flex-col justify-end bg-[#4a4445]">
        <div className="h-[3px] bg-[#6c9cc4]" />
      </div>
      <Svg box="0 0 19 11" className="ml-[788px] h-[11px] w-[19px]">
        <path d="m.7 10.300 8.800-9 8.800 9" stroke="#fff" strokeWidth="1.500" />
      </Svg>
      <Svg box="0 0 21 21" className="ml-[22px] h-[21px] w-[21px]">
        <path d="M7 17.500 14 2.500q2-3 3.500 0 .5 1-.5 2.500l-7 12q-2 2.500-3 .5ZM12 7l4 2M7.500 11.500C3 11 0 15 1 18c1.500 4 6 1 7-2M17 9.500c4-1.500 4.500 3 1 3.500-2 0-3-1-4-1" stroke="#fff" strokeWidth="1.300" />
      </Svg>
      <Fit className="ml-[24px] w-[34px] text-[17.500px]">ENG</Fit>
      <div className="ml-[20px] flex w-[84px] shrink-0 flex-col items-center text-[18px] leading-[28px]">
        <Fit className="w-[74px]">11:53 PM</Fit>
        <Fit className="w-[83px]">1/14/2022</Fit>
      </div>
      <Svg box="0 0 25 25" className="ml-[27px] h-[25px] w-[25px]">
        <path d="M.8.800h23.400v18.500H16l-4.500 4.500L7 19.300H.8z" stroke="#fff" strokeWidth="1.400" />
      </Svg>
      <div className="mr-[6px] ml-auto h-full w-[2px] bg-[#6c6667]" />
    </div>
  );
}

export default function App() {
  return (
    <div className="flex h-[1080px] w-[1920px] flex-col overflow-hidden bg-white font-['Open_Sans','Noto_Sans',sans-serif] leading-normal">
      <TitleBar />
      <Toolbar />
      <VmTabs />
      <div className="mr-[3px] mb-[2px] ml-[1px] flex h-[847px] shrink-0 flex-col border-l-2 border-[#8f9091]">
        <GnomeBar />
        <div className="flex flex-1">
          <Dock />
          <div className="flex flex-1 flex-col">
            <BrowserChrome />
            <DluxHeader />
            <DluxBody />
          </div>
        </div>
      </div>
      <StatusBar />
      <Taskbar />
    </div>
  );
}
